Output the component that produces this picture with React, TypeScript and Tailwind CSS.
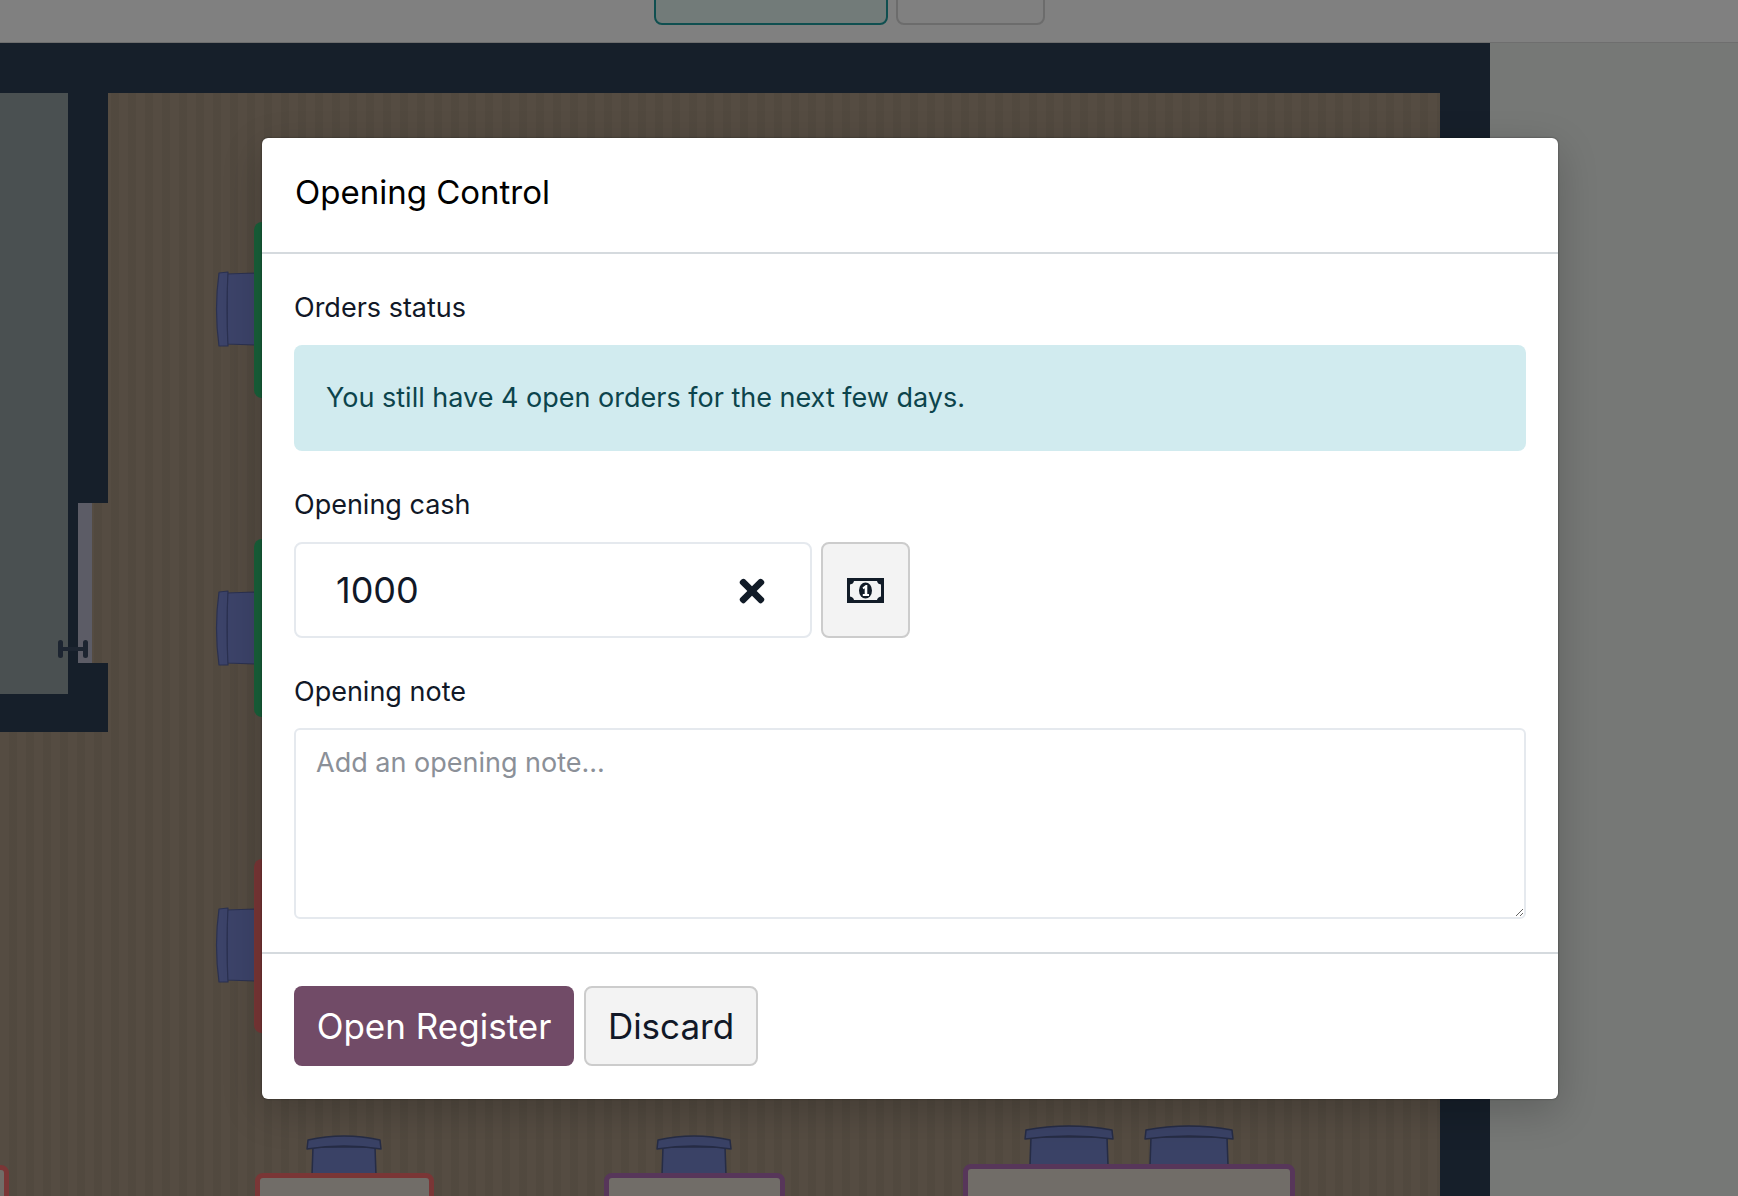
import React from 'react'
import { FaTimes } from 'react-icons/fa'

const fontFamily = "font-['Inter','Liberation_Sans',sans-serif]"

// chair seen from above, back rest at the top
function ChairTop({ className, width, height }: { className: string; width: number; height: number }) {
  const cap = 15
  return (
    <svg className={className} width={width} height={height} viewBox={`0 0 ${width} ${height}`}>
      <path d={`M7 ${cap - 2} H${width - 7} L${width - 6} ${height} H6 Z`} fill="#3a4266" stroke="#262c45" strokeWidth="1.5" />
      <path d={`M2 6 Q${width / 2} -2 ${width - 2} 6 L${width - 1} ${cap} Q${width / 2} ${cap - 6} 1 ${cap} Z`} fill="#3a4266" stroke="#262c45" strokeWidth="1.5" strokeLinejoin="round" />
    </svg>
  )
}

// chair seen from above, back rest on the left
function ChairLeft({ className }: { className: string }) {
  return (
    <svg className={className} width="40" height="76" viewBox="0 0 40 76">
      <path d="M12 3 L40 2 V74 L12 73 Z" fill="#3c4369" stroke="#2b3150" strokeWidth="1.2" />
      <path d="M4 2 L13 1 Q11 38 13 75 L4 75 Q-1 38 4 2 Z" fill="#3c4369" stroke="#2b3150" strokeWidth="1.2" strokeLinejoin="round" />
    </svg>
  )
}

function MoneyIcon() {
  return (
    <svg width="37" height="25" viewBox="0 0 37 25">
      <path d="M0 0H37V25H0Z M7 3 Q6.500 6 3 6.500 V18.500 Q6.500 19 7 22 H30 Q30.500 19 34 18.500 V6.500 Q30.500 6 30 3 Z" fill="#111b27" fillRule="evenodd" />
      <ellipse cx="18.500" cy="12.500" rx="6.500" ry="8" fill="#111b27" />
      <path d="M15.500 9.500 L18.800 7 H20.300 V16 H22 V18 H15.800 V16 H17.700 V10.300 L16.400 11.200 Z" fill="#ffffff" />
    </svg>
  )
}

const App: React.FC = () => {
  return (
    <div className={`relative h-[1196px] w-full overflow-hidden bg-[#767876] ${fontFamily}`}>
      {/* top bar with the floor tabs */}
      <div className="relative h-[43px] border-b border-[#6e6e6e] bg-[#808080]">
        <div className="absolute left-[654px] top-[-10px] h-[35px] w-[234px] rounded-lg border-2 border-[#0f4f50] bg-[#727b79]" />
        <div className="absolute left-[896px] top-[-10px] h-[35px] w-[149px] rounded-lg border-2 border-[#6c6c6c]" />
      </div>

      {/* floor plan */}
      <div className="absolute left-0 top-[43px] h-[1153px] w-[1490px] bg-[#161f2a]">
        <div className="absolute left-0 top-[50px] h-[1103px] w-[1440px] bg-[#534a40] bg-[repeating-linear-gradient(90deg,rgba(255,255,255,0.012)_0px,rgba(255,255,255,0.012)_9px,rgba(0,0,0,0.018)_9px,rgba(0,0,0,0.018)_17px)]" />

        {/* left room */}
        <div className="absolute left-0 top-[50px] h-[601px] w-[68px] bg-[#4a5051]" />
        <div className="absolute left-[68px] top-[50px] h-[410px] w-[40px] bg-[#161f2a]" />
        <div className="absolute left-[68px] top-[460px] h-[160px] w-[10px] bg-[#161f2a]" />
        <div className="absolute left-[78px] top-[460px] h-[160px] w-[14px] bg-[#5c5c66]" />
        <div className="absolute left-[68px] top-[620px] h-[69px] w-[40px] bg-[#161f2a]" />
        <div className="absolute left-0 top-[651px] h-[38px] w-[108px] bg-[#161f2a]" />
        <div className="absolute left-[58px] top-[597px] h-[18px] w-[5px] rounded-sm bg-[#1d2531]" />
        <div className="absolute left-[83px] top-[597px] h-[18px] w-[5px] rounded-sm bg-[#1d2531]" />
        <div className="absolute left-[60px] top-[604px] h-[4px] w-[26px] bg-[#1d2531]" />

        {/* tables on the left side */}
        <ChairLeft className="absolute left-[215px] top-[228px]" />
        <div className="absolute left-[254px] top-[179px] h-[176px] w-[60px] rounded-lg bg-[#18613a]" />
        <ChairLeft className="absolute left-[215px] top-[547px]" />
        <div className="absolute left-[254px] top-[496px] h-[178px] w-[60px] rounded-lg bg-[#18613a]" />
        <ChairLeft className="absolute left-[215px] top-[864px]" />
        <div className="absolute left-[254px] top-[816px] h-[174px] w-[60px] rounded-lg bg-[#7a3636]" />

        {/* tables at the bottom */}
        <div className="absolute left-[-170px] top-[1122px] h-[60px] w-[179px] rounded-lg border-[5px] border-[#7a3636] bg-[#716d68]" />
        <ChairTop className="absolute left-[306px] top-[1091px]" width={76} height={41} />
        <div className="absolute left-[255px] top-[1130px] h-[60px] w-[179px] rounded-lg border-[5px] border-[#7a3636] bg-[#716d68]" />
        <ChairTop className="absolute left-[656px] top-[1091px]" width={76} height={41} />
        <div className="absolute left-[604px] top-[1130px] h-[60px] w-[181px] rounded-lg border-[5px] border-[#57365a] bg-[#716d68]" />
        <ChairTop className="absolute left-[1024px] top-[1081px]" width={90} height={41} />
        <ChairTop className="absolute left-[1144px] top-[1081px]" width={90} height={41} />
        <div className="absolute left-[963px] top-[1121px] h-[60px] w-[332px] rounded-lg border-[5px] border-[#57365a] bg-[#716d68]" />
      </div>

      {/* dialog */}
      <div className="absolute left-[262px] top-[138px] flex h-[961px] w-[1296px] flex-col rounded-[6px] bg-white text-[#111827] shadow-[0_0_2px_rgba(0,0,0,0.5),0_12px_40px_rgba(0,0,0,0.2)]">
        <div className="flex h-[116px] shrink-0 items-center border-b-2 border-[#d5dade] px-[33px] pb-[4px]">
          <h1 className="text-[33px] font-normal text-black">Opening Control</h1>
        </div>

        <div className="flex flex-1 flex-col border-b-2 border-[#d5dade] px-[32px] pt-[37px]">
          <label className="h-[34px] text-[27px] leading-[34px]">Orders status</label>
          <div className="mt-[20px] flex h-[106px] items-center rounded-lg bg-[#d1ebef] px-[32px] text-[27px] text-[#0c444c]">
            You still have 4 open orders for the next few days.
          </div>

          <label className="mt-[37px] h-[34px] text-[27px] leading-[34px]">Opening cash</label>
          <div className="mt-[20px] flex gap-[9px]">
            <div className="flex h-[96px] w-[518px] items-center justify-between rounded-lg border-2 border-[#e5e9ee] pl-[40px] pr-[40px]">
              <span className="text-[36px]">1000</span>
              <FaTimes size={36} color="#111b27" className="mt-[2px]" />
            </div>
            <button className="flex h-[96px] w-[89px] items-center justify-center rounded-lg border-2 border-[#cccccc] bg-[#f3f3f3]">
              <MoneyIcon />
            </button>
          </div>

          <label className="mt-[37px] h-[34px] text-[27px] leading-[34px]">Opening note</label>
          <textarea
            placeholder="Add an opening note..."
            className="mt-[19px] h-[191px] w-full rounded-md border-2 border-[#e5e9ee] px-[20px] py-[16px] text-[27px] leading-[34px] placeholder:text-[#8b9098]"
          />
        </div>

        <div className="flex h-[145px] shrink-0 items-start gap-[10px] px-[32px] pt-[32px]">
          <button className="flex h-[80px] w-[280px] items-center justify-center rounded-lg bg-[#714b67] text-[35px] text-white">
            Open Register
          </button>
          <button className="flex h-[80px] w-[174px] items-center justify-center rounded-lg border-2 border-[#cccccc] bg-[#f3f3f3] text-[35px] text-[#111827]">
            Discard
          </button>
        </div>
      </div>
    </div>
  )
}

export default App
